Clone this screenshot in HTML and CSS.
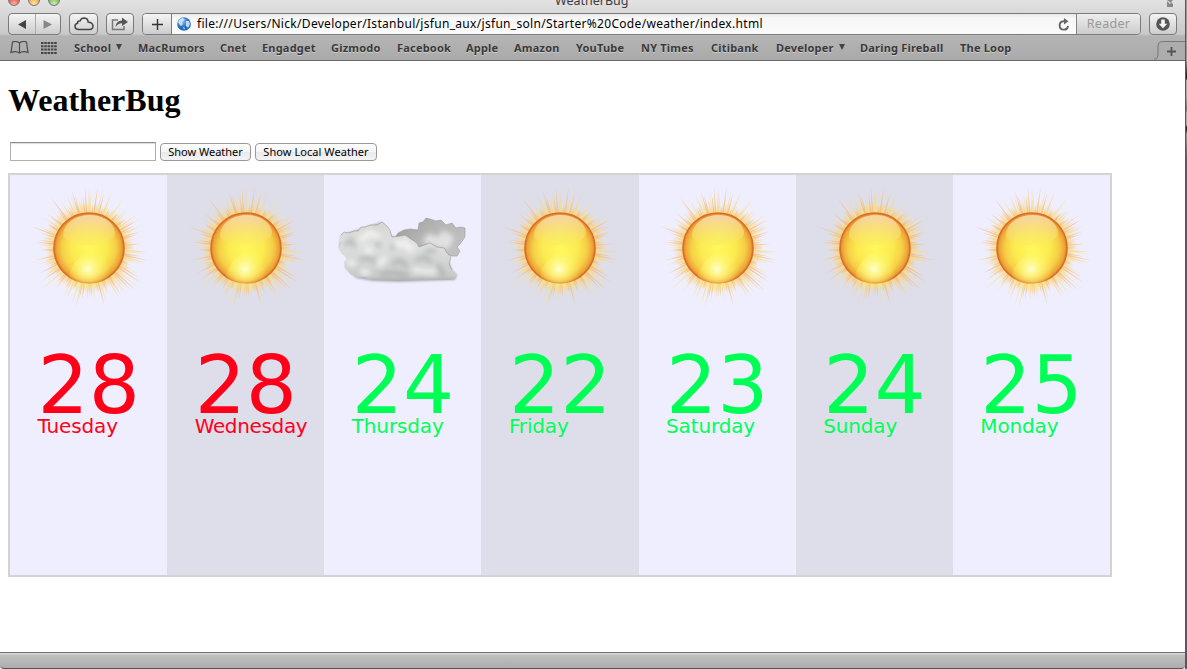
FILE: index.html
```
<!DOCTYPE html>
<html lang="en">
<head>
<meta charset="utf-8">
<title>WeatherBug</title>
<link rel="stylesheet" href="styles.css">
</head>
<body>
<svg class="defs" width="0" height="0">
  <defs>
    <radialGradient id="disc" cx="36" cy="36" r="36" gradientUnits="userSpaceOnUse">
      <stop offset="0" stop-color="#fff95a"/><stop offset=".5" stop-color="#fbea50"/>
      <stop offset=".75" stop-color="#f6cf46"/><stop offset=".9" stop-color="#eda638"/><stop offset="1" stop-color="#de7324"/>
    </radialGradient>
    <radialGradient id="glow"><stop offset="0" stop-color="#ffffd0"/><stop offset=".35" stop-color="#fffb90" stop-opacity=".75"/><stop offset="1" stop-color="#fff95a" stop-opacity="0"/></radialGradient>
    <radialGradient id="halo"><stop offset=".6" stop-color="#f6b44a" stop-opacity=".8"/><stop offset=".8" stop-color="#fbc85e" stop-opacity=".35"/><stop offset="1" stop-color="#ffdc80" stop-opacity="0"/></radialGradient>
    <linearGradient id="gloss" x2="0" y2="1"><stop offset="0" stop-color="#f8d8b0" stop-opacity=".95"/><stop offset="1" stop-color="#fae860" stop-opacity=".35"/></linearGradient>
    <linearGradient id="front" x2="0" y2="1"><stop offset="0" stop-color="#d4d4d2"/><stop offset=".45" stop-color="#dedfde"/><stop offset=".85" stop-color="#c8cac8"/><stop offset="1" stop-color="#8e908e"/></linearGradient>
    <linearGradient id="back" x2="1" y2=".6"><stop offset="0" stop-color="#999"/><stop offset=".5" stop-color="#b4b4b4"/><stop offset="1" stop-color="#c0c0c0"/></linearGradient>
    <radialGradient id="globe" cx=".4" cy=".3"><stop offset="0" stop-color="#7fb8f0"/><stop offset="1" stop-color="#1d68bc"/></radialGradient>
    <filter id="soft" x="-30%" y="-30%" width="160%" height="160%"><feGaussianBlur stdDeviation="2.4"/></filter>
    <filter id="edge" x="-10%" y="-10%" width="120%" height="120%"><feGaussianBlur stdDeviation="1"/></filter>
    <symbol id="sun" viewBox="-63 -63 126 126">
      <circle r="46" fill="url(#halo)"/>
      <g id="rays"></g>
      <g transform="translate(-36 -36)">
        <circle cx="36" cy="36" r="35" fill="url(#disc)" stroke="#d96f25" stroke-width="1.6"/>
        <circle cx="35" cy="57" r="22" fill="url(#glow)" clip-path="circle(34px at 36px 36px)"/>
        <path d="M10 22C14-3 58-3 62 20C63 36 10 38 10 22Z" fill="url(#gloss)"/>
      </g>
    </symbol>
    <clipPath id="cloudclip"><path d="M3 22L6 19L11 20L16 18L20 18L23 14L27 14L32 12L39 12L44 9L49 13L52 17L54 24L62 23L67 22L73 26L79 30L81 34L92 30L99 34L106 35L109 40L113 44L111 51L114 57L119 62L117 66L111 67L82 67L60 68L34 67L27 64L18 64L12 61L7 54L6 49L10 45L4 41L1 35L3 30L1 26Z"/></clipPath>
    <symbol id="cloud" viewBox="0 0 132 76">
      <path d="M3 22L16 18L44 9L54 24L67 22L81 34L106 35L114 57L119 62L117 67L60 69L34 68L18 65L7 54L10 45L1 35Z" fill="#555" opacity=".4" filter="url(#edge)"/>
      <path d="M57 25L60 20L66 17L72 16L80 17L81 10L85 9L88 5L92 6L98 8L103 7L108 12L114 10L118 15L122 14L127 15L127 24L122 31L119 34L122 38L119 43L114 43L107 40L92 33L79 33L67 25Z" fill="url(#back)" stroke="#9a9a9a" stroke-width=".6"/>
      <path d="M84 29L91 20L99 24L106 17L116 24L111 36L99 34Z" fill="#e8e8e8" opacity=".85" filter="url(#soft)"/>
      <g clip-path="url(#cloudclip)">
        <rect width="130" height="74" fill="url(#front)"/>
        <g filter="url(#soft)">
          <path d="M6 33L13 27L17 35M22 47L30 44L38 49M54 51L62 47L69 53M78 47L86 44L94 49M87 38L98 38M52 33L58 35M42 61L58 60L70 63M100 51L106 64M37 29L43 34" fill="none" stroke="#8d9899" stroke-width="4" opacity=".5"/>
          <path d="M22 27L32 20L42 24M57 31L68 30L74 39M9 48L17 52M40 53L48 44M74 57L98 59M27 37L34 39M22 58L32 60" fill="none" stroke="#fff" stroke-width="6" opacity=".6"/>
        </g>
        <path d="M30 67H118" stroke="#696d69" stroke-width="3" opacity=".8" filter="url(#edge)"/>
      </g>
      <path d="M3 22L6 19L11 20L16 18L20 18L23 14L27 14L32 12L39 12L44 9L49 13L52 17L54 24L62 23L67 22L73 26L79 30L81 34L92 30L99 34L106 35L109 40L113 44L111 51L114 57" fill="none" stroke="#888" stroke-width=".7" opacity=".7"/>
    </symbol>
  </defs>
</svg>

<div class="desktop">
<div class="window">
  <header class="chrome">
    <div class="titlebar">
      <div class="lights"><i class="red"></i><i class="amber"></i><i class="green"></i></div>
      <span class="title">WeatherBug</span>
      <svg class="full" width="8" height="8" viewBox="0 0 8 8"><path d="M1 0H7L5 2L7 4V7H1V1L4 4L5 3Z" fill="#888"/></svg>
    </div>
    <div class="toolbar">
      <div class="btn nav">
        <svg width="52" height="20"><path d="M9 10.500L17 6V15Z" fill="#444"/><path d="M26.500 0V20" stroke="#aaa"/><path d="M43 10.500L34.500 6V15Z" fill="#888"/></svg>
      </div>
      <div class="btn cloudbtn">
        <svg width="20" height="14" viewBox="0 0 20 14"><path d="M5 12.500Q1 12.500 1 9.300Q1 6.800 3.600 6.300Q3.300 3.700 6 3.900Q7.200 1 10.200 1Q14 1.300 14.100 5Q18.800 5.600 19 9Q18.900 12.400 15.500 12.500Z" fill="none" stroke="#444" stroke-width="1.500"/></svg>
      </div>
      <div class="btn sharebtn">
        <svg width="18" height="14" viewBox="0 0 18 14"><path d="M7 3H1.500V12.500H13V9" fill="none" stroke="#777" stroke-width="1.500"/><path d="M4.500 10Q5 3.500 11 3.500V.5L17 5L11 9V6.200Q7 6 4.500 10Z" fill="#555"/></svg>
      </div>
      <div class="field">
        <div class="add"><svg width="11" height="11"><path d="M5.500 0V11M0 5.500H11" stroke="#333" stroke-width="1.400"/></svg></div>
        <div class="address">
          <svg width="14" height="14" viewBox="0 0 14 14"><circle cx="7" cy="7" r="6.800" fill="url(#globe)"/><path d="M1 5Q3 1 6 1L8 3L5 5L6 7L4 9L2 7ZM9 4L12 4L13 7L11 11L9 9ZM6 10L8 11L7 13Z" fill="#d6ecfb" opacity=".85"/></svg>
          <span class="url">file:///Users/Nick/Developer/Istanbul/jsfun_aux/jsfun_soln/Starter%20Code/weather/index.html</span>
          <svg class="reload" width="12" height="13" viewBox="0 0 12 13"><path d="M7 3.200H5.500A4.200 4.200 0 1 0 10 8" fill="none" stroke="#666" stroke-width="1.900"/><path d="M6 0L10.500 3.200L6 6.500Z" fill="#666"/></svg>
        </div>
        <div class="reader"><span>Reader</span></div>
      </div>
      <div class="btn downbtn">
        <svg width="14" height="14" viewBox="0 0 14 14"><circle cx="7" cy="7" r="6.800" fill="#555"/><path d="M5.200 2.600H8.800V6.700H11.300L7 11.300L2.700 6.700H5.200Z" fill="#f4f4f4"/></svg>
      </div>
    </div>
    <nav class="bookmarks">
      <svg class="book" width="19" height="13" viewBox="0 0 19 13"><path d="M9.500 2Q6-.5 2.500 1L1 11.500Q6 9.500 9.500 12Q13 9.500 18 11.500L16.500 1Q13-.5 9.500 2ZM9.500 2V12" fill="none" stroke="#4c4c4c" stroke-width="1.200"/></svg>
      <svg class="dots" width="16" height="12" viewBox="0 0 16 12"><path d="M0 1H16M0 4.300H16M0 7.600H16M0 10.900H16" stroke="#444" stroke-width="2" stroke-dasharray="2.500 .8"/></svg>
      <span>School<b class="tri"></b></span><span>MacRumors</span><span>Cnet</span><span>Engadget</span><span>Gizmodo</span><span>Facebook</span><span>Apple</span><span>Amazon</span><span>YouTube</span><span>NY Times</span><span>Citibank</span><span>Developer<b class="tri"></b></span><span>Daring Fireball</span><span>The Loop</span>
      <svg class="newtab" width="31" height="19" viewBox="0 0 31 19"><path d="M0 19Q4 18 4 14V5Q4 .5 8.500 .5H31V19Z" fill="#adadad"/><path d="M0 18.500Q4 18 4 14V5Q4 .5 8.500 .5H31" fill="none" stroke="#777"/><path d="M17.500 6V15M13 10.500H22" stroke="#555" stroke-width="1.800"/></svg>
    </nav>
  </header>

  <main class="page">
    <h1>WeatherBug</h1>
    <form class="controls">
      <input type="text" aria-label="City">
      <button type="button" class="show">Show Weather</button>
      <button type="button" class="local">Show Local Weather</button>
    </form>
    <section class="forecast">
      <article class="day hot"><svg class="icon"><use href="#sun"/></svg><strong>28</strong><span>Tuesday</span></article>
      <article class="day hot"><svg class="icon"><use href="#sun"/></svg><strong>28</strong><span>Wednesday</span></article>
      <article class="day"><svg class="icon clouds"><use href="#cloud"/></svg><strong>24</strong><span>Thursday</span></article>
      <article class="day"><svg class="icon"><use href="#sun"/></svg><strong>22</strong><span>Friday</span></article>
      <article class="day"><svg class="icon"><use href="#sun"/></svg><strong>23</strong><span>Saturday</span></article>
      <article class="day"><svg class="icon"><use href="#sun"/></svg><strong>24</strong><span>Sunday</span></article>
      <article class="day"><svg class="icon"><use href="#sun"/></svg><strong>25</strong><span>Monday</span></article>
    </section>
  </main>
  <footer class="status"></footer>
</div>
<div class="behind"></div>
</div>
<script src="rays.js"></script>
</body>
</html>
```
FILE: styles.css
```
* { box-sizing: border-box; }
body { margin: 0; background: #fff; overflow: hidden; }
svg { display: block; flex: none; }
.defs { position: absolute; }
.desktop { display: flex; width: 1187px; height: 669px; }
.window { width: 1185px; height: 669px; display: flex; flex-direction: column; }
.behind { width: 2px; background: linear-gradient(#999 0 60px, #222 75px 79px, #aaa 80px 97px, #7088a0 105px, #668a50 110px, #aaa 113px 125px, #222 127px 130px, #999 134px, #535766 160px 100%); border-left: 1px solid #555963; }

.chrome { height: 61px; flex: none; border-bottom: 1px solid #686868; background: linear-gradient(#e2e2e2, #c9c9c9 34px, #b4b4b4 36px, #aaa); font-family: "Noto Sans", sans-serif; overflow: hidden; }
.titlebar { height: 13px; position: relative; overflow: hidden; }
.lights { display: flex; gap: 8px; padding-left: 8px; margin-top: -6px; }
.lights i { width: 12px; height: 12px; border-radius: 50%; border: 1px solid #777; }
.red { background: radial-gradient(circle at 50% 85%, #ffb0a5, #e0463e 70%); }
.amber { background: radial-gradient(circle at 50% 85%, #ffe6a0, #e7a03a 70%); }
.green { background: radial-gradient(circle at 50% 85%, #cdf0a8, #69b150 70%); }
.title { position: absolute; left: 555px; top: -8px; font-size: 12.500px; line-height: 18px; color: #3c3c3c; }
.full { position: absolute; left: 1166px; top: 0; }
.toolbar { display: flex; height: 22px; padding-left: 8px; }
.btn, .field { height: 22px; border: 1px solid #7b7b7b; border-radius: 4px; }
.btn { background: linear-gradient(#f4f4f4, #cdcdcd); display: flex; align-items: center; justify-content: center; }
.nav { width: 53px; margin-right: 8px; }
.cloudbtn { width: 29px; margin-right: 8px; }
.sharebtn { width: 28px; margin-right: 8px; }
.downbtn { width: 28px; }
.field { width: 999px; display: flex; margin-right: 8px; overflow: hidden; }
.add { width: 29px; background: linear-gradient(#f4f4f4, #cdcdcd); border-right: 1px solid #7b7b7b; display: flex; align-items: center; justify-content: center; }
.address { flex: 1; display: flex; align-items: center; background: linear-gradient(#e8e8e8, #f7f7f7 4px, #fafafa); padding: 0 6px 0 5px; }
.url { font-size: 12px; line-height: 20px; margin-left: 6px; color: #000; letter-spacing: .306px; white-space: nowrap; }
.reload { margin-left: auto; }
.reader { width: 64px; border-left: 1px solid #858585; background: linear-gradient(#eee, #ccc); color: #999; font-size: 12.500px; line-height: 20px; text-align: center; letter-spacing: .3px; }

.bookmarks { display: grid; grid-template-columns: 31px 33px 64px 82px 42px 69px 66px 69px 48px 62px 65px 70px 65px 84px 100px 194px 31px; padding-left: 10px; height: 25px; font-size: 11px; font-weight: bold; line-height: 25px; letter-spacing: .2px; color: #3a3a3a; text-shadow: 0 1px 0 #ccc; white-space: nowrap; }
.book { margin-top: 6px; }
.dots { margin-top: 7px; }
.tri { display: inline-block; border: 3.5px solid transparent; border-top: 6px solid #444; border-bottom: 0; margin: 0 0 2px 5px; }
.newtab { margin-top: 6px; }

.page { flex: 1; padding: 21px 8px 0; overflow: hidden; }
h1 { margin: 0; font: bold 32px/37px "Liberation Serif", serif; }
.controls { display: flex; margin-top: 22px; padding-left: 2px; height: 21px; }
.controls input { width: 146px; height: 19px; margin: 1px 4px 0 0; border: 1px solid #b0b0b0; border-top-color: #8c8c8c; box-shadow: inset 0 1px 1px #ddd; background: #fff; }
.controls button { height: 18px; margin: 2px 4px 0 0; padding: 0; border: 1px solid #999; border-radius: 4px; background: linear-gradient(#fff, #f4f4f4 50%, #e9e9e9 51%, #f4f4f4); font: 11px/14px "Noto Sans", sans-serif; color: #000; white-space: nowrap; }
.show { width: 91px; }
.local { width: 122px; letter-spacing: .06px; }
.forecast { display: flex; width: 1104px; height: 404px; margin-top: 11px; border: 2px solid #d3d3d3; background: #efeeff; }
.day { flex: 1 1 0; min-width: 0; padding: 10px 0 0 27.5px; display: flex; flex-direction: column; color: #00ff55; font-family: "DejaVu Sans", sans-serif; }
.day:nth-child(even) { background: #dedeeb; }
.hot { color: #ff0018; }
.icon { width: 126px; height: 126px; margin-left: -11.500px; overflow: visible; }
.clouds { width: 132px; height: 76px; margin: 28px 0 22px -13.500px; }
.day strong { margin-top: 34px; font-size: 80.500px; line-height: 80px; font-weight: normal; }
.day span { margin-top: -9px; font-size: 20px; line-height: 20px; letter-spacing: -.15px; }
.day:nth-child(2) span { letter-spacing: -.35px; }
.status { height: 17px; flex: none; border-top: 1px solid #707070; border-bottom: 1px solid #555; background: linear-gradient(#d8d8d8 0 1px, #bfbfbf 2px, #adadad); border-radius: 0 0 4px 4px; }
```
FILE: rays.js
```
// Thin tapered rays round the sun's disc, with a fixed seed so every sun is alike.
const rays = document.getElementById('rays');
const tints = ['#f9bd6c', '#fbd57a', '#f8e27c', '#f9b87a'];
let seed = 17;
const rnd = () => (seed = (seed * 16807) % 2147483647) / 2147483647;
for (let i = 0; i < 130; i++) {
  const angle = i * 2.77 + rnd() * 1.5;
  const length = 42 + Math.pow(rnd(), 1.3) * 22;
  const path = document.createElementNS('http://www.w3.org/2000/svg', 'path');
  path.setAttribute('d', `M34 -1L${length.toFixed(1)} 0L34 1Z`);
  path.setAttribute('transform', `rotate(${angle.toFixed(1)})`);
  path.setAttribute('fill', tints[i % 4]);
  path.setAttribute('opacity', '.7');
  rays.appendChild(path);
}
```
